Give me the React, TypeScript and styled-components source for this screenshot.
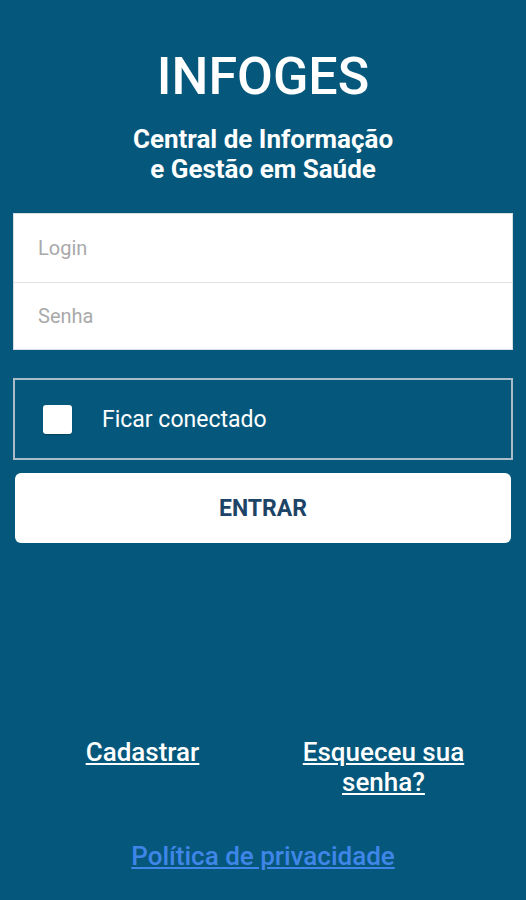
import styled, { createGlobalStyle } from 'styled-components';

const GlobalStyle = createGlobalStyle`
  html, body {
    margin: 0;
    padding: 0;
    background: #05587c;
  }
  body {
    font-family: Roboto, 'Liberation Sans', sans-serif;
  }
`;

export default function App() {
  return (
    <>
      <GlobalStyle />
      <Page>
        <Title>INFOGES</Title>
        <Subtitle>
          Central de Informação
          <br />e Gestão em Saúde
        </Subtitle>

        <FieldCard>
          <Field placeholder="Login" />
          <Field placeholder="Senha" type="password" />
        </FieldCard>

        <RememberBox>
          <CheckBox />
          <RememberText>Ficar conectado</RememberText>
        </RememberBox>

        <SubmitButton>ENTRAR</SubmitButton>

        <Footer>
          <LinkRow>
            <LinkCell>
              <WhiteLink href="#">Cadastrar</WhiteLink>
            </LinkCell>
            <LinkCell>
              <WhiteLink href="#">Esqueceu sua senha?</WhiteLink>
            </LinkCell>
          </LinkRow>
          <PrivacyLink href="#">Política de privacidade</PrivacyLink>
        </Footer>
      </Page>
    </>
  );
}

const Page = styled.div`
  min-height: 900px;
  box-sizing: border-box;
  padding: 47px 13px 29px;
  display: flex;
  flex-direction: column;
  background: #05587c;
`;

const Title = styled.h1`
  margin: 0;
  color: #ffffff;
  text-align: center;
  font-size: 52px;
  font-weight: 500;
  line-height: 60px;
`;

const Subtitle = styled.div`
  margin-top: 17px;
  color: #ffffff;
  text-align: center;
  font-size: 26px;
  font-weight: 700;
  line-height: 30px;
`;

const FieldCard = styled.div`
  margin-top: 29px;
  background: #ffffff;
  border: 1px solid #d6dde2;
  display: flex;
  flex-direction: column;
`;

const Field = styled.input`
  height: 68px;
  box-sizing: border-box;
  border: none;
  outline: none;
  padding: 0 24px;
  font-family: Roboto, 'Liberation Sans', sans-serif;
  font-size: 20px;
  color: #333;
  background: transparent;

  & + & {
    border-top: 1px solid #dfe3e6;
    height: 67px;
  }

  &::placeholder {
    color: #a9a9a9;
  }
`;

const RememberBox = styled.label`
  margin-top: 28px;
  height: 82px;
  box-sizing: border-box;
  border: 2px solid #a9bcc8;
  display: flex;
  align-items: center;
  padding-left: 28px;
  gap: 30px;
`;

const CheckBox = styled.span`
  width: 29px;
  height: 29px;
  background: #ffffff;
  border-radius: 3px;
  box-shadow: 0 1px 1px rgba(0, 0, 0, 0.25);
`;

const RememberText = styled.span`
  color: #ffffff;
  font-size: 23px;
  font-weight: 400;
`;

const SubmitButton = styled.button`
  margin: 13px 2px 0;
  height: 70px;
  border: none;
  border-radius: 6px;
  background: #ffffff;
  color: #1d4466;
  font-family: Roboto, 'Liberation Sans', sans-serif;
  font-size: 23px;
  font-weight: 700;
  cursor: pointer;
`;

const Footer = styled.div`
  margin-top: auto;
  display: flex;
  flex-direction: column;
  align-items: center;
`;

const LinkRow = styled.div`
  width: 100%;
  box-sizing: border-box;
  padding: 0 9px;
  display: grid;
  grid-template-columns: 1fr 1fr;
`;

const LinkCell = styled.div`
  padding: 0 30px;
  text-align: center;
`;

const WhiteLink = styled.a`
  color: #ffffff;
  font-size: 26px;
  font-weight: 500;
  line-height: 30px;
  text-decoration: underline;
`;

const PrivacyLink = styled.a`
  margin-top: 44px;
  color: #3f86e8;
  font-size: 26px;
  font-weight: 500;
  line-height: 30px;
  text-decoration: underline;
`;
